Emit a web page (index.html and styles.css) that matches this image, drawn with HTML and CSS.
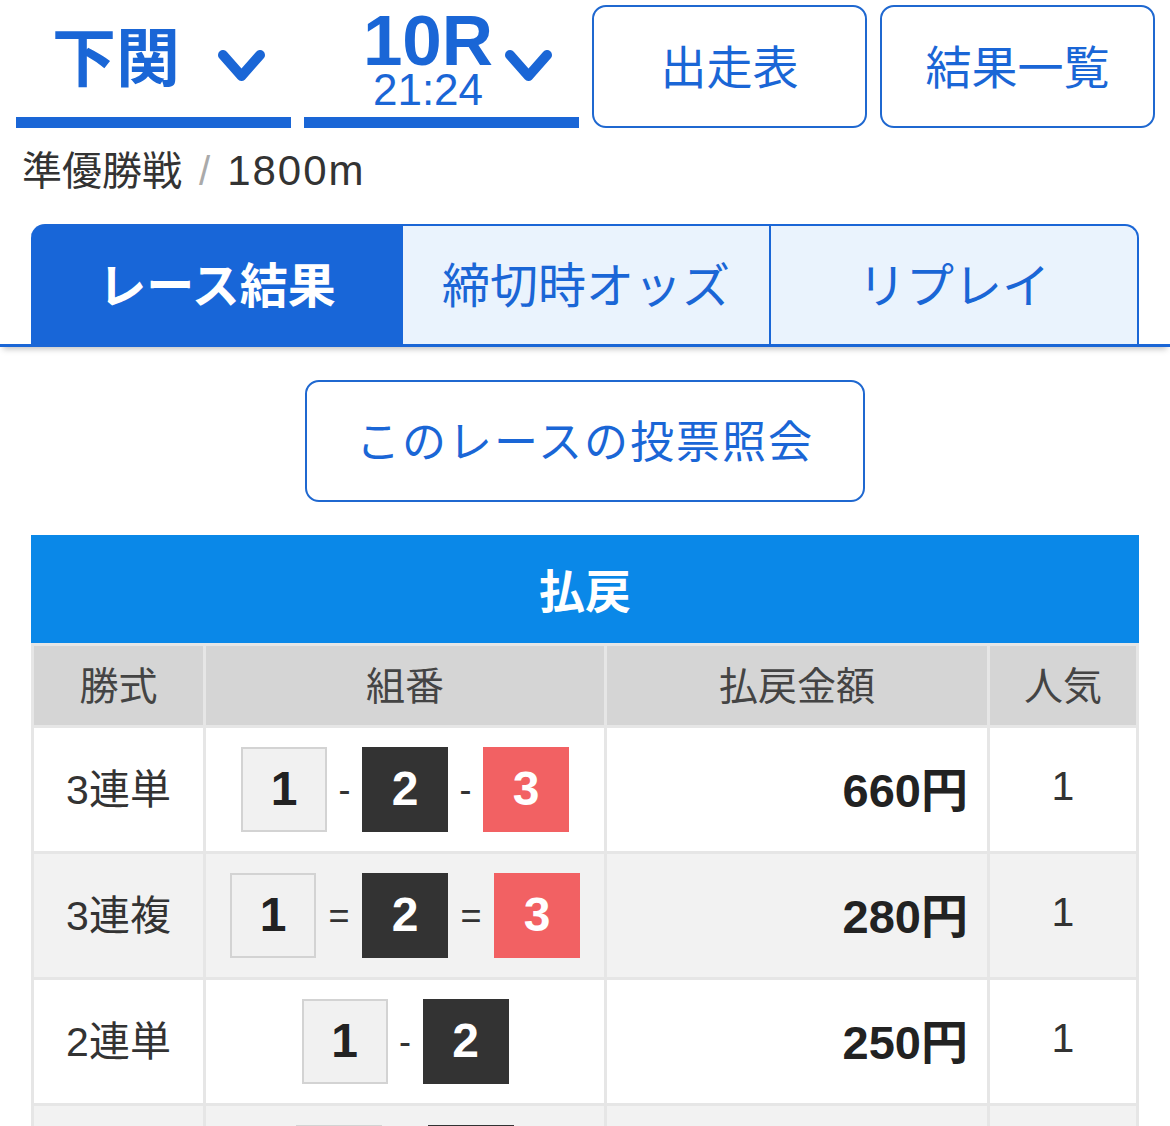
FILE: index.html
```html
<!DOCTYPE html>
<html lang="ja">
<head>
  <meta charset="UTF-8">
  <meta name="viewport" content="width=device-width, initial-scale=1.0">
  <title>レース結果 下関 10R</title>
  <link rel="stylesheet" href="styles.css">
</head>
<body>
  <div class="header">
    <div class="select select-place">
      <span class="place">下関</span>
      <svg class="chev" viewBox="0 0 47 32"><polyline points="5,5 23.5,26 42,5"/></svg>
    </div>
    <div class="select select-race">
      <div class="race">
        <span class="race-no">10R</span>
        <span class="race-time">21:24</span>
      </div>
      <svg class="chev" viewBox="0 0 47 32"><polyline points="5,5 23.5,26 42,5"/></svg>
    </div>
    <a class="nav-btn" href="#">出走表</a>
    <a class="nav-btn" href="#">結果一覧</a>
  </div>

  <p class="race-info">準優勝戦<span class="slash">/</span><span class="distance">1800m</span></p>

  <div class="tabs-wrap">
    <ul class="tabs">
      <li class="tab active">レース結果</li>
      <li class="tab">締切時オッズ</li>
      <li class="tab">リプレイ</li>
    </ul>
  </div>

  <div class="inquiry">
    <a class="inquiry-btn" href="#">このレースの投票照会</a>
  </div>

  <div class="payout">
    <div class="payout-title">払戻</div>
    <table class="payout-table">
      <colgroup>
        <col class="col-type">
        <col class="col-combo">
        <col class="col-amount">
        <col class="col-pop">
      </colgroup>
      <thead>
        <tr>
          <th>勝式</th>
          <th>組番</th>
          <th>払戻金額</th>
          <th>人気</th>
        </tr>
      </thead>
      <tbody>
        <tr>
          <td>3連単</td>
          <td>
            <div class="combo">
              <span class="box box-1">1</span><span class="sep">-</span><span class="box box-2">2</span><span class="sep">-</span><span class="box box-3">3</span>
            </div>
          </td>
          <td class="amount">660円</td>
          <td>1</td>
        </tr>
        <tr>
          <td>3連複</td>
          <td>
            <div class="combo">
              <span class="box box-1">1</span><span class="sep sep-eq">=</span><span class="box box-2">2</span><span class="sep sep-eq">=</span><span class="box box-3">3</span>
            </div>
          </td>
          <td class="amount">280円</td>
          <td>1</td>
        </tr>
        <tr>
          <td>2連単</td>
          <td>
            <div class="combo">
              <span class="box box-1">1</span><span class="sep">-</span><span class="box box-2">2</span>
            </div>
          </td>
          <td class="amount">250円</td>
          <td>1</td>
        </tr>
        <tr>
          <td>2連複</td>
          <td>
            <div class="combo">
              <span class="box box-1">1</span><span class="sep sep-eq">=</span><span class="box box-2">2</span>
            </div>
          </td>
          <td class="amount"></td>
          <td></td>
        </tr>
      </tbody>
    </table>
  </div>
</body>
</html>
```

FILE: styles.css
```css
body {
  margin: 0;
  font-family: "Liberation Sans", "Noto Sans CJK JP", sans-serif;
  color: #333;
  background: #fff;
}

/* top selectors and buttons */
.header {
  display: grid;
  grid-template-columns: repeat(4, 1fr);
  gap: 13px;
  padding: 5px 15px 0 16px;
}
.select {
  height: 123px;
  box-sizing: border-box;
  border-bottom: 11px solid #1a66d6;
  display: flex;
  align-items: center;
  justify-content: center;
  color: #1a66d6;
}
.select-place {
  gap: 38px;
  padding-left: 10px;
}
.select-race {
  gap: 12px;
  padding-left: 32px;
}
.place {
  font-size: 64px;
  font-weight: bold;
  line-height: 64px;
  margin-bottom: 4px;
}
.chev {
  width: 47px;
  height: 32px;
  margin-top: 10px;
  fill: none;
  stroke: #1a66d6;
  stroke-width: 10;
  stroke-linecap: round;
  stroke-linejoin: round;
}
.race {
  display: flex;
  flex-direction: column;
  align-items: center;
}
.race-no {
  font-size: 71px;
  font-weight: bold;
  line-height: 58px;
}
.race-time {
  font-size: 44px;
  line-height: 40px;
}
.nav-btn {
  height: 123px;
  box-sizing: border-box;
  border: 2.5px solid #1f68d0;
  border-radius: 14px;
  padding-bottom: 5px;
  display: flex;
  align-items: center;
  justify-content: center;
  font-size: 46px;
  color: #1a66d6;
  text-decoration: none;
}

.race-info {
  margin: 0;
  padding: 19px 22px 29px;
  font-size: 40px;
  line-height: 48px;
  color: #333;
}
.slash {
  color: #aaa;
  margin: 0 17px;
}
.distance {
  font-size: 42px;
  letter-spacing: 2px;
}

/* tabs */
.tabs-wrap {
  padding: 0 31px;
  border-bottom: 3px solid #1a66d6;
  box-shadow: 0 5px 6px -3px rgba(0, 0, 0, 0.25);
}
.tabs {
  display: grid;
  grid-template-columns: 372px 1fr 1fr;
  list-style: none;
  margin: 0;
  padding: 0;
}
.tab {
  height: 120px;
  box-sizing: border-box;
  padding-bottom: 6px;
  display: flex;
  align-items: center;
  justify-content: center;
  font-size: 48px;
  color: #1a66d6;
  background: #eaf3fd;
  border-top: 2.5px solid #1a66d6;
  border-right: 2.5px solid #1a66d6;
}
.tab.active {
  background: #1866d8;
  color: #fff;
  font-weight: bold;
  border-right: 0;
  border-top-left-radius: 14px;
}
.tab:last-child {
  border-top-right-radius: 14px;
}

.inquiry {
  display: flex;
  justify-content: center;
  padding: 33px 0;
}
.inquiry-btn {
  width: 560px;
  height: 122px;
  box-sizing: border-box;
  border: 2.5px solid #1f68d0;
  border-radius: 14px;
  padding-bottom: 5px;
  display: flex;
  align-items: center;
  justify-content: center;
  font-size: 44px;
  letter-spacing: 2px;
  color: #1a66d6;
  text-decoration: none;
}

/* payout table */
.payout {
  margin: 0 31px;
}
.payout-title {
  height: 108px;
  box-sizing: border-box;
  padding-bottom: 3px;
  background: #0a88e8;
  color: #fff;
  font-size: 46px;
  font-weight: bold;
  display: flex;
  align-items: center;
  justify-content: center;
}
.payout-table {
  width: 100%;
  table-layout: fixed;
  border-spacing: 3px;
  background: #e6e6e6;
}
.col-type { width: 169px; }
.col-combo { width: 398px; }
.col-amount { width: 380px; }
.col-pop { width: 146px; }
.payout-table th {
  height: 79px;
  box-sizing: border-box;
  padding: 0 0 6px;
  background: #d5d5d5;
  font-size: 39px;
  font-weight: normal;
  color: #444;
}
.payout-table td {
  height: 123px;
  box-sizing: border-box;
  padding: 0 0 7px;
  text-align: center;
  font-size: 41px;
  color: #333;
  background: #fff;
}
.payout-table tbody tr:nth-child(even) td {
  background: #f2f2f2;
}
.payout-table td.amount {
  text-align: right;
  padding-right: 19px;
  font-size: 47px;
  font-weight: bold;
  color: #222;
}
.combo {
  display: flex;
  justify-content: center;
  align-items: center;
  margin-top: 7px;
}
.box {
  width: 86px;
  height: 85px;
  box-sizing: border-box;
  padding-bottom: 3px;
  display: flex;
  align-items: center;
  justify-content: center;
  font-size: 48px;
  font-weight: bold;
}
.box-1 {
  background: #f1f1f1;
  border: 2px solid #d3d3d3;
  color: #222;
}
.box-2 {
  background: #333;
  color: #fff;
}
.box-3 {
  background: #f26163;
  color: #fff;
}
.sep {
  width: 35px;
  text-align: center;
  font-size: 36px;
  color: #333;
}
.sep-eq {
  width: 46px;
}
```
